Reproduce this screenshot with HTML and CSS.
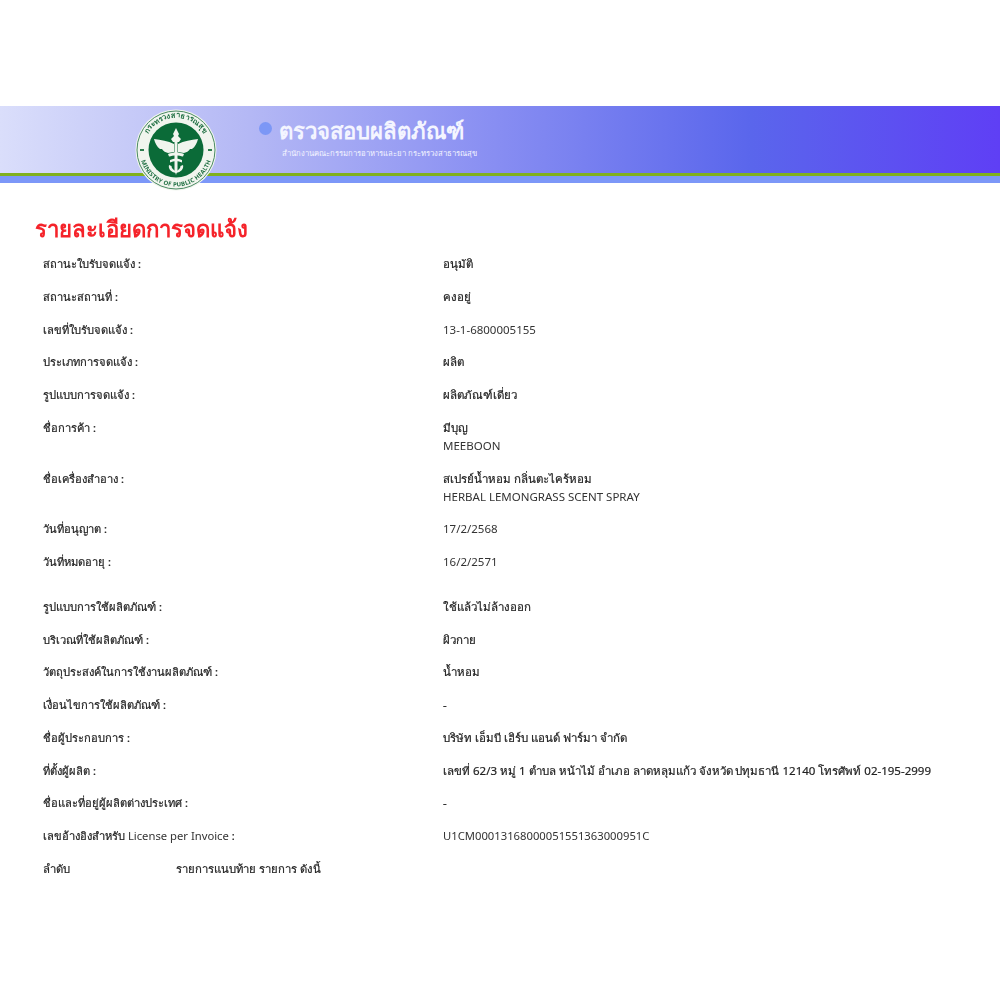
FILE: index.html
```html
<!DOCTYPE html>
<html lang="th">
<head>
<meta charset="utf-8">
<title>ตรวจสอบผลิตภัณฑ์</title>
<link rel="stylesheet" href="styles.css">
</head>
<body>
<div class="page">
  <header class="banner">
    <div class="banner-main">
      <span class="dot"></span>
      <div class="brand">
        <div class="brand-title">ตรวจสอบผลิตภัณฑ์</div>
        <div class="brand-sub">สำนักงานคณะกรรมการอาหารและยา กระทรวงสาธารณสุข</div>
      </div>
    </div>
    <div class="banner-green"></div>
    <div class="banner-blue"></div>
    <svg class="logo" viewBox="0 0 82 82" width="82" height="82" aria-label="ตรากระทรวงสาธารณสุข">
      <defs>
        <path id="arc-top" d="M8.500 41a32.500 32.500 0 0 1 65 0"/>
        <path id="arc-bottom" d="M4.500 41a36.500 36.500 0 0 0 73 0"/>
      </defs>
      <circle cx="41" cy="41" r="40.500" fill="#f1f5ee"/>
      <circle cx="41" cy="41" r="39" fill="none" stroke="#4a8a63" stroke-width="1"/>
      <circle cx="41" cy="41" r="27.500" fill="#0b6b38"/>
      <text class="logo-top"><textPath href="#arc-top" startOffset="50%" text-anchor="middle">กระทรวงสาธารณสุข</textPath></text>
      <text class="logo-bottom"><textPath href="#arc-bottom" startOffset="50%" text-anchor="middle">MINISTRY OF PUBLIC HEALTH</textPath></text>
      <path d="M5 41h4M73 41h4" stroke="#2f7d4f" stroke-width="2"/>
      <g fill="#f1f5ee">
        <path d="M41 19l3 6-1 2 3 3-2 3h-6l-2-3 3-3-1-2z"/>
        <path d="M39.500 32h3v29l-1.500 5-1.500-5z"/>
        <path d="M19 30c7 1 14 2 20 5v8l-6 1c-3-1-5-2-6-4l-2 0c-3-2-5-6-6-10zM63 30c-7 1-14 2-20 5v8l6 1c3-1 5-2 6-4l2 0c3-2 5-6 6-10z"/>
        <path d="M33 45c5-2 11-2 16 0l-1 2.500c-4-1.500-10-1.500-14 0zM35 51c4-2 8-2 12 0v2.500c-4-2-8-2-12 0zM34 56c-1 4 2 7 7 8 5-1 8-4 7-8l-2.500 1c0 2.500-2 4-4.500 5-2.500-1-4.500-2.500-4.500-5z"/>
      </g>
    </svg>
  </header>

  <main class="content">
    <h1 class="heading">รายละเอียดการจดแจ้ง</h1>
    <div class="rows">
      <div class="row"><div>สถานะใบรับจดแจ้ง :</div><div>อนุมัติ</div></div>
      <div class="row"><div>สถานะสถานที่ :</div><div>คงอยู่</div></div>
      <div class="row"><div>เลขที่ใบรับจดแจ้ง :</div><div class="latin">13-1-6800005155</div></div>
      <div class="row"><div>ประเภทการจดแจ้ง :</div><div>ผลิต</div></div>
      <div class="row"><div>รูปแบบการจดแจ้ง :</div><div>ผลิตภัณฑ์เดี่ยว</div></div>
      <div class="row"><div>ชื่อการค้า :</div><div>มีบุญ<br><span class="latin">MEEBOON</span></div></div>
      <div class="row"><div>ชื่อเครื่องสำอาง :</div><div>สเปรย์น้ำหอม กลิ่นตะไคร้หอม<br><span class="latin">HERBAL LEMONGRASS SCENT SPRAY</span></div></div>
      <div class="row"><div>วันที่อนุญาต :</div><div class="latin">17/2/2568</div></div>
      <div class="row row-spaced"><div>วันที่หมดอายุ :</div><div class="latin">16/2/2571</div></div>
      <div class="row"><div>รูปแบบการใช้ผลิตภัณฑ์ :</div><div>ใช้แล้วไม่ล้างออก</div></div>
      <div class="row"><div>บริเวณที่ใช้ผลิตภัณฑ์ :</div><div>ผิวกาย</div></div>
      <div class="row"><div>วัตถุประสงค์ในการใช้งานผลิตภัณฑ์ :</div><div>น้ำหอม</div></div>
      <div class="row"><div>เงื่อนไขการใช้ผลิตภัณฑ์ :</div><div>-</div></div>
      <div class="row"><div>ชื่อผู้ประกอบการ :</div><div>บริษัท เอ็มบี เฮิร์บ แอนด์ ฟาร์มา จำกัด</div></div>
      <div class="row"><div>ที่ตั้งผู้ผลิต :</div><div>เลขที่ 62/3 หมู่ 1 ตำบล หน้าไม้ อำเภอ ลาดหลุมแก้ว จังหวัด ปทุมธานี 12140 โทรศัพท์ 02-195-2999</div></div>
      <div class="row"><div>ชื่อและที่อยู่ผู้ผลิตต่างประเทศ :</div><div>-</div></div>
      <div class="row"><div>เลขอ้างอิงสำหรับ <span class="latin license">License per Invoice</span> :</div><div class="latin license">U1CM00013168000051551363000951C</div></div>
      <div class="list-head"><div>ลำดับ</div><div>รายการแนบท้าย รายการ ดังนี้</div></div>
    </div>
  </main>
</div>
</body>
</html>
```
FILE: styles.css
```css
* { box-sizing: border-box; }
html, body { margin: 0; background: #fff; }
body {
  font-family: "Noto Sans", "Open Sans", "Noto Sans CJK SC", sans-serif;
  font-size: 11.500px;
  line-height: 18px;
  color: #222;
}
.page { padding-top: 106px; height: 1000px; overflow: hidden; filter: blur(0.45px); }
.banner { position: relative; }
.banner-main {
  height: 67px;
  padding-left: 259px;
  display: flex;
  align-items: flex-start;
  background: linear-gradient(90deg, #dadefb 0%, #b4b8f5 25%, #878df2 50%, #5a66ec 75%, #5f3ff5 100%);
}
.dot {
  width: 13px;
  height: 13px;
  margin-top: 16px;
  border-radius: 50%;
  background: #7c97f6;
}
.brand { margin-left: 7px; color: #f4f5ff; }
.brand-title { font-size: 22.100px; line-height: 30px; margin-top: 9px; font-weight: 600; }
.brand-sub { font-size: 7.700px; line-height: 10px; margin-top: 3px; margin-left: 3px; }
.banner-green { height: 3px; background: #80b01c; }
.banner-blue { height: 7px; background: #7c97f8; }
.logo { position: absolute; left: 135px; top: 3px; }
.logo-top { font-size: 7.400px; font-weight: 700; fill: #1f6f42; }
.logo-bottom { font-size: 6px; font-weight: 700; fill: #1f6f42; letter-spacing: .2px; }
.content { padding: 0 0 0 35px; }
.heading {
  margin: 30px 0 0;
  font-size: 22.150px;
  line-height: 30px;
  font-weight: 700;
  color: #f5232a;
}
.rows {
  margin-top: 12px;
  padding-left: 8px;
  display: flex;
  flex-direction: column;
  gap: 14.750px;
  -webkit-text-stroke: 0.2px #222;
}
.row { display: grid; grid-template-columns: 400px 1fr; }
.row > div:first-child { font-size: 11.150px; }
.row-spaced { margin-bottom: 12px; }
.list-head { display: grid; grid-template-columns: 133px 1fr; font-size: 11.300px; }
.latin { font-size: 11.500px; color: #333; -webkit-text-stroke: 0; }
.license { font-size: 11.250px; }
```
